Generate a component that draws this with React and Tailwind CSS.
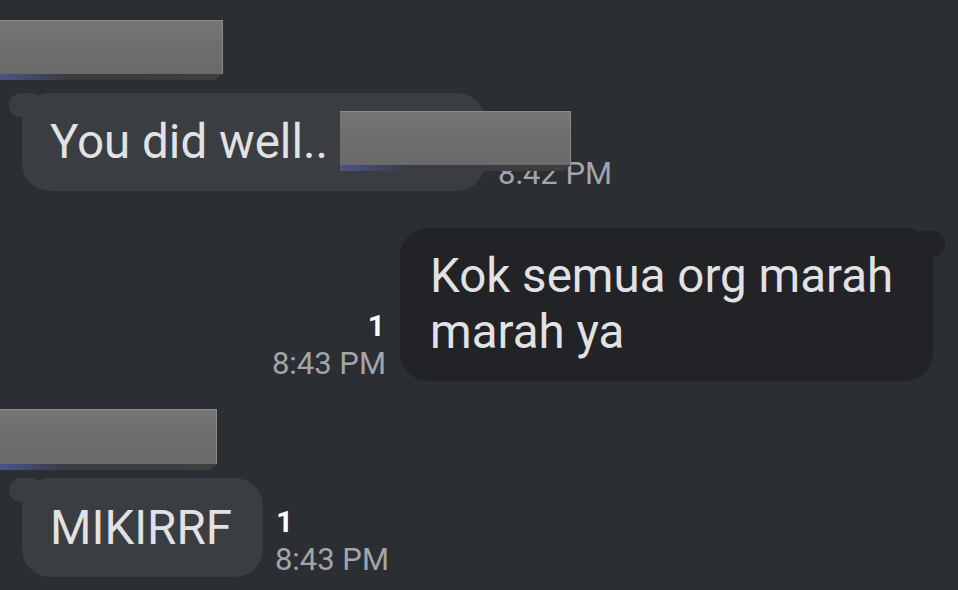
import React from "react";

function Redact({ className = "" }) {
  return (
    <div className={"flex flex-col " + className}>
      <div className="flex-1 bg-gradient-to-b from-[#767676] via-[#6d6d6d] to-[#6a6a6a] border-t border-r border-[#8a8a8a]" />
      <div className="h-[6px] bg-gradient-to-r from-[#4c5388] via-[#3a3b41] via-30% to-[#3e3e3e] [clip-path:polygon(0_0,100%_0,calc(100%-8px)_100%,0_100%)]" />
    </div>
  );
}

function Received({ className = "", children }) {
  return (
    <div className={"relative ml-[22px] bg-[#3a3d42] rounded-[28px] pl-[28px] pt-[21px] pb-[21px] text-[47.5px] leading-[56px] text-[#e2e2e3] " + className}>
      <div className="absolute left-[-13px] top-0 w-[34px] h-[24px] rounded-full bg-[#3a3d42]" />
      <span className="relative">{children}</span>
    </div>
  );
}

function Meta({ time, read, end }) {
  return (
    <div className={"flex flex-col " + (end ? "items-end" : "items-start")}>
      {read && (
        <div className="text-[30px] leading-[28px] font-bold text-white mb-[7px] px-[1px]">1</div>
      )}
      <div className="text-[31px] leading-[34px] text-[#a3a5a9]">{time}</div>
    </div>
  );
}

export default function App() {
  return (
    <div className="w-[958px] h-[590px] bg-[#2b2e33] overflow-hidden relative font-['Roboto',sans-serif]">
      <div className="flex flex-col pt-[20px]">
        <Redact className="w-[223px] h-[60px]" />
        <div className="mt-[13px] flex items-end gap-[13px]">
          <Received className="w-[463px]">You did well..</Received>
          <Meta time="8:42 PM" />
        </div>
        <div className="mt-[37px] flex items-end justify-end gap-[14px] pr-[25px]">
          <Meta time="8:43 PM" read end />
          <div className="relative w-[533px] bg-[#212326] rounded-[28px] pl-[30px] pr-[20px] pt-[20px] pb-[21px] text-[47.5px] leading-[56px] text-[#e2e2e3]">
            <div className="absolute right-[-12px] top-[3px] w-[34px] h-[26px] rounded-full bg-[#212326]" />
            <span className="relative">Kok semua org marah marah ya</span>
          </div>
        </div>
        <div className="mt-[28px]">
          <Redact className="w-[217px] h-[61px]" />
        </div>
        <div className="mt-[8px] flex items-end gap-[12px]">
          <Received className="pr-[31px] pt-[22px]">MIKIRRF</Received>
          <Meta time="8:43 PM" read />
        </div>
      </div>
      <Redact className="absolute left-[340px] top-[111px] w-[231px] h-[60px]" />
    </div>
  );
}
